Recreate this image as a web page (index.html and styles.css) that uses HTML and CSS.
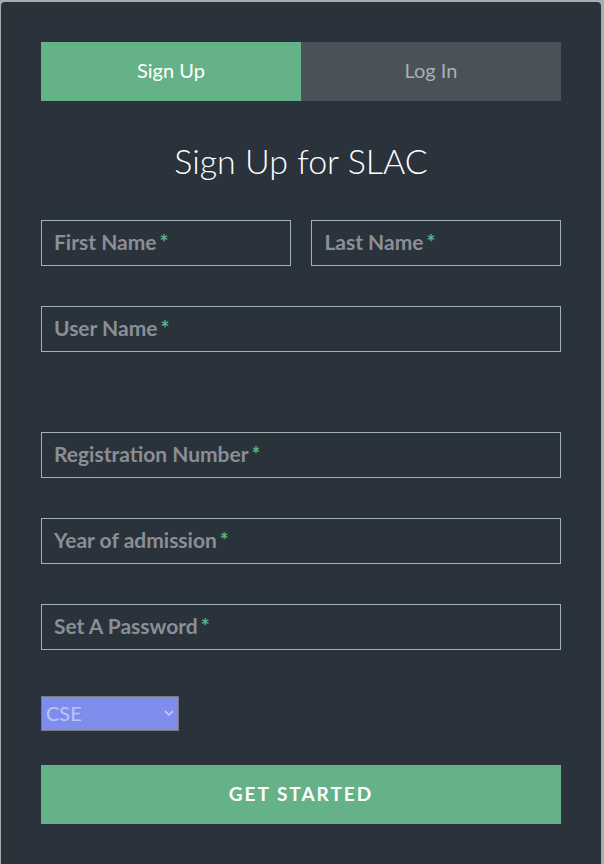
FILE: index.html
```html
<!DOCTYPE html>
<html lang="en">
<head>
<meta charset="utf-8">
<title>Sign Up for SLAC</title>
<link rel="stylesheet" href="styles.css">
</head>
<body>
<div class="form">
  <ul class="tabs">
    <li class="tab active">Sign Up</li>
    <li class="tab">Log In</li>
  </ul>
  <h1 class="title">Sign Up for SLAC</h1>
  <form class="fields">
    <div class="top-row">
      <div class="field">
        <input class="input" type="text" aria-label="First Name">
        <label class="label">First Name<span class="req">*</span></label>
      </div>
      <div class="field">
        <input class="input" type="text" aria-label="Last Name">
        <label class="label">Last Name<span class="req">*</span></label>
      </div>
    </div>
    <div class="field field-wide">
      <input class="input" type="text" aria-label="User Name">
      <label class="label">User Name<span class="req">*</span></label>
    </div>
    <div class="field">
      <input class="input" type="text" aria-label="Registration Number">
      <label class="label">Registration Number<span class="req">*</span></label>
    </div>
    <div class="field">
      <input class="input" type="text" aria-label="Year of admission">
      <label class="label">Year of admission<span class="req">*</span></label>
    </div>
    <div class="field">
      <input class="input" type="password" aria-label="Set A Password">
      <label class="label">Set A Password<span class="req">*</span></label>
    </div>
    <div class="select-wrap">
      <select class="select" aria-label="Branch">
        <option>CSE</option>
        <option>ECE</option>
        <option>ME</option>
      </select>
      <svg class="chevron" width="10" height="7" viewBox="0 0 10 7"><path d="M1 1.2 L5 5 L9 1.2" fill="none" stroke="#c9d0f7" stroke-width="1.6"/></svg>
    </div>
    <button class="button" type="button">Get Started</button>
  </form>
</div>
</body>
</html>
```
FILE: styles.css
```css
* { box-sizing: border-box; }

html, body {
  margin: 0;
  padding: 0;
  background: #ababab;
  font-family: Lato, "Open Sans", sans-serif;
}

.form {
  width: 600px;
  margin: 2px 0 0 1px;
  padding: 40px 40px 40px;
  background: #2a323c;
  border-radius: 4px;
  min-height: 880px;
}

.tabs {
  list-style: none;
  margin: 0 0 40px;
  padding: 0;
  display: grid;
  grid-template-columns: 1fr 1fr;
}

.tab {
  height: 59px;
  padding-bottom: 3px;
  display: flex;
  align-items: center;
  justify-content: center;
  font-size: 20px;
  color: #a6b0b4;
  background: #4a5159;
}

.tab.active {
  background: #66b288;
  color: #ffffff;
}

.title {
  margin: 0 0 40px;
  height: 39px;
  line-height: 39px;
  text-align: center;
  color: #ffffff;
  font-weight: 300;
  font-size: 34px;
}

.fields {
  margin: 0;
  display: flex;
  flex-direction: column;
}

.top-row {
  display: grid;
  grid-template-columns: 48% 48%;
  column-gap: 4%;
  margin-bottom: 40px;
}

.field {
  position: relative;
  height: 46px;
  margin-bottom: 40px;
}

.top-row .field { margin-bottom: 0; }

.field-wide { margin-bottom: 80px; }

.input {
  display: block;
  width: 100%;
  height: 46px;
  margin: 0;
  padding: 5px 12px;
  background: transparent;
  border: 1px solid #a0b3b0;
  border-radius: 0;
  color: #ffffff;
  font-family: inherit;
  font-size: 21px;
  outline: none;
}

.label {
  position: absolute;
  left: 13px;
  top: 11px;
  font-size: 21px;
  line-height: 21px;
  font-weight: 700;
  color: #8a8f96;
  pointer-events: none;
  white-space: nowrap;
}

.req {
  margin-left: 3px;
  color: #5fb386;
  font-weight: 700;
}

.select-wrap {
  position: relative;
  width: 138px;
  height: 35px;
  margin-top: 6px;
  margin-bottom: 34px;
}

.select {
  appearance: none;
  -webkit-appearance: none;
  display: block;
  width: 138px;
  height: 35px;
  margin: 0;
  padding: 0 0 2px 4px;
  background: #7f8cec;
  border: 1px solid #7b7b7b;
  border-radius: 0;
  color: #b9c6f5;
  font-family: inherit;
  font-size: 20px;
  outline: none;
}

.chevron {
  position: absolute;
  right: 5px;
  top: 14px;
  pointer-events: none;
}

.button {
  display: block;
  width: 100%;
  height: 59px;
  margin: 0;
  padding: 0 0 2px;
  border: 0;
  background: #66b288;
  color: #ffffff;
  font-family: inherit;
  font-size: 19px;
  font-weight: 700;
  letter-spacing: 2px;
  text-transform: uppercase;
}
```
